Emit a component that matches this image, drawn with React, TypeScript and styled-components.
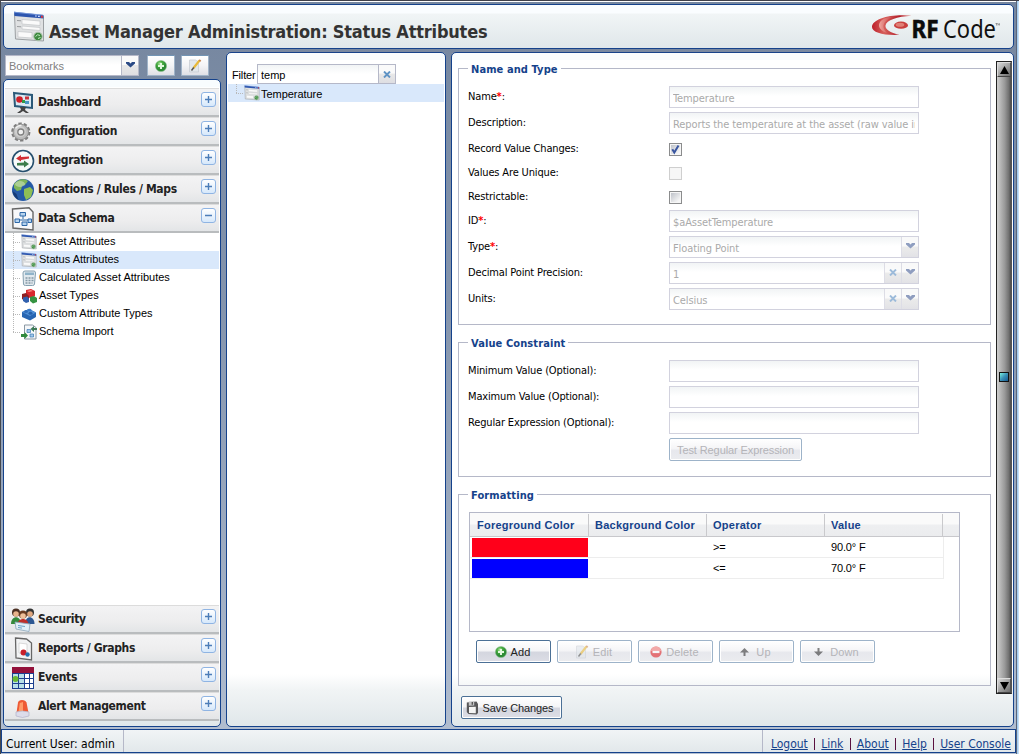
import React from "react";
import styled, { createGlobalStyle } from "styled-components";

const tahoma = `"DejaVu Sans Condensed", "DejaVu Sans", Tahoma, sans-serif`;
const arial = `"Liberation Sans", Arial, sans-serif`;
const navy = "#15428b";

const Global = createGlobalStyle`
  * { box-sizing: border-box; }
  body { margin: 0; overflow: hidden; font: 11px ${arial}; color: #000; }
  svg { display: block; flex: none; }
`;

const Page = styled.div`
  width: 1019px; height: 754px;
  display: flex; flex-direction: column;
  padding: 4px 0 0 3px;
  border-top: 1px solid #3f3f48;
  border-left: 1px solid #44484f;
  background:
    linear-gradient(90deg, #5b6579 0 1px, #a5cdf0 1px 2px, #c5def5 2px) right / 3px 100% no-repeat,
    linear-gradient(#fff, #fff) top / 100% 1px no-repeat,
    linear-gradient(#75869f, #8494ac 40%, #b3bfd1 100%);
`;
const Header = styled.header`
  width: 1011px; height: 45px;
  margin-top: -1px; margin-left: -1px;
  display: flex; align-items: center;
  padding: 0 13px 0 9px;
  border: 1px solid ${navy}; border-radius: 5px;
  background: linear-gradient(#fafdff 0 8px, #f1f5f6 9px, #e0e7ea);
`;
const Title = styled.h1`
  flex: 1; margin: 9px 0 0 4px;
  font: bold 18px ${tahoma}; letter-spacing: -0.2px; color: #333; white-space: nowrap;
`;
const Columns = styled.div`display: flex; margin: 3px 0 0 -1px; height: 675px;`;
const NavColumn = styled.div`width: 218px; margin-right: 5px; display: flex; flex-direction: column;`;
const BookmarkBar = styled.div`height: 27px; padding: 3px 0 0 2px; display: flex; align-items: flex-start;`;
const Panel = styled.section<{ $w?: number }>`
  ${(p) => (p.$w ? `width: ${p.$w}px;` : "flex: 1;")}
  border: 1px solid ${navy}; border-radius: 5px;
  background: linear-gradient(#f8fcfe 0 7px, transparent 7px),
    linear-gradient(#fff calc(100% - 52px), #f1f4f5 calc(100% - 36px), #e0e7ea 100%);
  overflow: hidden;
`;
const NavPanel = styled(Panel)`
  flex: 1; display: flex; flex-direction: column; padding: 8px 1px 5px;
`;
const FilterPanel = styled(Panel)`margin-right: 5px; padding: 10px 1px;`;
const MainPanel = styled(Panel)`flex: none; display: flex; padding: 8px 0 0 6px;`;

const Combo = styled.div<{ $w: number; $h?: number; $dim?: boolean }>`
  width: ${(p) => p.$w}px; height: ${(p) => p.$h ?? 22}px;
  display: flex; border: 1px solid ${(p) => (p.$dim ? "#d2d2de" : "#b5b8c8")};
  background: linear-gradient(#f1f4f5, #fff 9px);
`;
const ComboText = styled.span<{ $arial?: boolean; $color?: string }>`
  flex: 1; min-width: 0; margin: 0 3px; line-height: ${(p) => (p.$arial ? 20 : 23)}px;
  overflow: hidden; white-space: nowrap;
  font-family: ${(p) => (p.$arial ? arial : tahoma)};
  letter-spacing: ${(p) => (p.$arial ? 0 : -0.1)}px;
  color: ${(p) => p.$color ?? "#aaa"};
`;
const Trigger = styled.span<{ $dim?: boolean }>`
  width: 17px; display: flex; justify-content: center; padding-top: 6px;
  border-left: 1px solid ${(p) => (p.$dim ? "#d8d8e2" : "#b5b8c8")};
  background: linear-gradient(#fafafa 0 45%, #e8e8e8 50%, #dedee2);
  opacity: ${(p) => (p.$dim ? 0.85 : 1)};
`;
const IconButton = styled.button`
  width: 28px; height: 21px; margin-left: 8px; padding: 0;
  display: flex; align-items: center; justify-content: center;
  border: 1px solid #9fb3c8; border-top-color: #7395b5; border-radius: 1px;
  background: linear-gradient(#fff, #f4f4f6 50%, #dfe0e6);
  & + & { margin-left: 6px; }
`;

const AccordionHead = styled.div`
  height: 29px; flex: none; display: flex; align-items: center; padding: 0 3px 0 6px;
  border-top: 1px solid #dcdcdc; border-bottom: 2px solid #b9bcbe;
  background: linear-gradient(#f3f3f4, #ededee 60%, #e3e5e7);
  font: bold 12px ${tahoma}; letter-spacing: -0.34px; color: #222;
`;
const HeadIcon = styled.span`width: 24px; height: 24px; margin: 2px 3px 0 0; flex: none;`;
const HeadLabel = styled.span`flex: 1; white-space: nowrap;`;
const Tool = styled.span`
  width: 15px; height: 15px; margin: -5px 0 0; display: flex; align-items: center; justify-content: center;
  border: 1px solid #8fb4e3; border-radius: 3px; background: linear-gradient(#fff, #d6e8fb);
`;
const TreeRow = styled.div<{ $on?: boolean }>`
  height: 18px; display: flex; align-items: center; padding-left: 8px;
  background: ${(p) => (p.$on ? "#d9e8fb" : "transparent")};
`;
const Stem = styled.span<{ $last?: boolean }>`
  width: 8px; height: 18px; flex: none;
  background:
    repeating-linear-gradient(#b8b8b8 0 1px, transparent 1px 2px) left top / 1px ${(p) => (p.$last ? "9px" : "18px")} no-repeat,
    repeating-linear-gradient(90deg, #b8b8b8 0 1px, transparent 1px 2px) 0 9px / 8px 1px no-repeat;
`;
const TreeLabel = styled.span<{ $low?: boolean }>`
  margin: 0 0 0 ${(p) => (p.$low ? 1 : 2)}px; height: 18px; line-height: ${(p) => (p.$low ? 20 : 16)}px;
  white-space: nowrap; letter-spacing: ${(p) => (p.$low ? -0.05 : 0)}px;
`;
const Spacer = styled.div`flex: 1;`;

const FilterRow = styled.div`display: flex; align-items: center; padding-left: 4px; height: 21px;`;
const FilterLabel = styled.label`width: 25px; padding-top: 2px; white-space: nowrap; letter-spacing: -0.15px;`;

const Form = styled.div`width: 533px; margin-right: 5px; padding-top: 7px;`;
const Group = styled.section<{ $h: number; $mb: number }>`
  height: ${(p) => p.$h}px; margin-bottom: ${(p) => p.$mb}px;
  padding-left: 9px;
  border: 1px solid #b5b8c8;
`;
const Legend = styled.h2`
  width: fit-content; height: 14px; margin: -8px 0 11px 0; padding: 0 3px;
  font: bold 11px/17px ${tahoma}; letter-spacing: 0.1px; color: ${navy}; background: #fff;
`;
const Field = styled.div<{ $h: number }>`height: ${(p) => p.$h}px; display: flex;`;
const Label = styled.label`
  width: 201px; padding-top: 4px; font-family: ${tahoma}; letter-spacing: -0.15px; white-space: nowrap;
`;
const Req = styled.span`color: #f00; font-weight: bold;`;
const Check = styled.span<{ $dim?: boolean }>`
  width: 13px; height: 13px; margin-top: 5px;
  border: 1px solid ${(p) => (p.$dim ? "#cfcfcf" : "#8b8c8d")};
  box-shadow: inset 0 0 0 1px #f6f6f6;
  background: ${(p) => (p.$dim ? "#f7f7f7" : "linear-gradient(135deg, #b8bcc4, #f6f6f6 80%)")};
`;

const Button = styled.button<{ $w: number; $dim?: boolean; $gap?: number; $tight?: boolean; $left?: number; $pr?: number }>`
  width: ${(p) => p.$w}px; height: 23px; padding: 0 ${(p) => p.$pr ?? 2}px 0 0; margin-left: ${(p) => p.$left ?? 0}px;
  display: flex; align-items: center; justify-content: center; gap: ${(p) => p.$gap ?? 4}px;
  border: 1px solid ${(p) => (p.$dim ? "#9db3c9" : "#4b7096")}; border-radius: 2px;
  box-shadow: inset 0 0 0 1px #fff;
  background: linear-gradient(#fff, #f5f5f7 45%, ${(p) => (p.$dim ? "#e7e8ed" : "#d4d6df")} 55%, ${(p) => (p.$dim ? "#ebecef" : "#dddee6")});
  font: 11px ${arial}; letter-spacing: ${(p) => (p.$tight ? -0.1 : 0.1)}px; color: ${(p) => (p.$dim ? "#b4b4b8" : "#222")};
  white-space: nowrap;
  svg { opacity: ${(p) => (p.$dim ? 0.6 : 1)}; }
`;
const ButtonBar = styled.div`display: flex; gap: 6px; margin: 8px 0 0 8px;`;

const Grid = styled.div`width: 491px; height: 120px; margin-left: 1px; border: 1px solid #b5b8c8; background: #fff;`;
const gridCols = "119px 118px 118px 118px 1fr";
const GridHead = styled.div`
  display: grid; grid-template-columns: ${gridCols}; height: 24px; padding-top: 1px;
  border-bottom: 1px solid #c8c8cc; background: linear-gradient(#fafafa 0 11px, #eeeff1 12px, #ebecee);
  font: bold 11px/23px ${arial}; letter-spacing: 0.25px; color: ${navy};
`;
const HeadCell = styled.div`
  padding-left: 7px; white-space: nowrap; border-right: 1px solid #c9c9cc;
  & + & { padding-left: 6px; }
  &:last-child { border: 0; }
`;
const GridRow = styled.div`
  display: grid; grid-template-columns: 119px 118px 118px 118px; width: 474px; height: 21px;
  border-right: 1px solid #ededed; border-bottom: 1px solid #ededed; line-height: 21px;
  letter-spacing: -0.15px;
`;
const Cell = styled.div`padding-left: 6px;`;
const Swatch = styled.div<{ $c: string }>`height: 19px; margin: 1px 1px 0 2px; background: ${(p) => p.$c};`;

const Scrollbar = styled.div`
  width: 16px; height: 633px; display: flex; flex-direction: column; justify-content: space-between;
  border: 1px solid #222; border-right-color: #555;
  background: linear-gradient(90deg, #cfcfcf, #999 55%, #707070 85%, #4c4c4c);
`;
const ScrollEnd = styled.span`
  height: 15px; display: flex; align-items: center; justify-content: center;
  border: 1px solid; border-color: #ddd #555 #444 #ddd;
  background: linear-gradient(135deg, #d8d8d8, #6c6c6c);
`;
const Thumb = styled.span`
  width: 10px; height: 10px; margin: 0 0 2px 2px;
  border: 1px solid #111; background: linear-gradient(135deg, #78f0e0, #3a8fb5 50%, #155a92);
`;

const Footer = styled.footer`
  width: 1015px; height: 24px; margin: 2px 0 0 -3px; display: flex;
  border: 1px solid ${navy}; background: linear-gradient(#f1f4f6, #e2e8eb);
  font: 12px/28px ${tahoma}; letter-spacing: -0.02px;
`;
const User = styled.div`width: 122px; padding-left: 4px; border-right: 1px solid #b5b8c8; white-space: nowrap;`;
const Links = styled.nav`
  width: 253px; margin-left: auto; padding: 0 4px 0 8px; display: flex; justify-content: space-between;
  border-left: 1px solid #b5b8c8; white-space: nowrap;
`;
const Link = styled.a`color: ${navy}; text-decoration: underline;`;
const Bar = styled.span`width: 1px; height: 12px; margin-top: 8px; background: #5a1040;`;

const Chevron = ({ c = "#2b4a86" }: { c?: string }) => (
  <svg width="9" height="6" viewBox="0 0 9 6"><path d="M0 0h3l1.500 1.500L6 0h3v1.500L4.500 5.500 0 1.500z" fill={c} /></svg>
);
const Cross = ({ c = "#5f93c4" }: { c?: string }) => (
  <svg width="8" height="7" viewBox="0 0 8 7"><path d="M1 .5l6 6M7 .5l-6 6" stroke={c} strokeWidth="1.9" /></svg>
);
const FormIcon = ({ size }: { size: number }) => (
  <svg width={size} height={size} viewBox="0 0 32 32">
    <path d="M1.500 3l29 2.500V30L2.500 28z" fill="#dfe1e2" stroke="#9b9fa2" />
    <path d="M1 .8L30.500 4v3.500L1.500 5z" fill="#2c55ae" />
    <path d="M1 1.200L30 4.200" stroke="#7d9fe0" strokeWidth=".8" />
    <path d="M22 5h1.800M25 5.300h1.800" stroke="#cddcff" strokeWidth="1.200" /><path d="M28 5.700h1.800" stroke="#e33" strokeWidth="2" />
    <path d="M9 8.500l18 1.500v4.500L9 13zM9 15l18 1.500v3L9 18zM5 20.500l14 1v5.500l-14-1z" fill="#fafafa" stroke="#c3c6c8" strokeWidth=".7" />
    <path d="M4 9.500l4 .3M4 15.500l4 .3" stroke="#9a9d9f" />
    <circle cx="25" cy="25.500" r="4.300" fill="#3f8a41" stroke="#b3c6b4" />
    <path d="M22.500 25.500q2-3 4.500-1M25 27.500l2.500-1" stroke="#bdeebd" fill="none" />
  </svg>
);
const PlusIcon = () => (
  <svg width="12" height="12" viewBox="0 0 12 12">
    <defs><radialGradient id="pg" cx=".4" cy=".3"><stop offset="0" stopColor="#b5e8a5" /><stop offset=".5" stopColor="#47ac3f" /><stop offset="1" stopColor="#2c8a35" /></radialGradient></defs>
    <circle cx="6" cy="6" r="5.600" fill="url(#pg)" stroke="#8abf8c" strokeWidth=".5" />
    <path d="M6 3v6M3 6h6" stroke="#e2f8de" strokeWidth="2" />
  </svg>
);
const PencilIcon = () => (
  <svg width="14" height="14" viewBox="0 0 14 14">
    <path d="M1.500 1h6l3 2v10h-9z" fill="#e2e7ec" stroke="#c4c9d0" strokeWidth=".7" />
    <path d="M11.500 1.500L5.500 9" stroke="#e8b93a" strokeWidth="2.200" /><path d="M12.500 1l-1 1.200" stroke="#c77f4a" strokeWidth="2" />
    <path d="M5.800 8.500L3.500 11.500" stroke="#555" strokeWidth="1.500" />
  </svg>
);
const MinusIcon = () => (
  <svg width="12" height="12" viewBox="0 0 12 12"><circle cx="6" cy="6" r="5.600" fill="#e02427" /><path d="M1 5a5 4.500 0 0110 0" fill="#f07674" /><path d="M2.500 6h7" stroke="#fff" strokeWidth="2.200" /></svg>
);
const Arrow = ({ down }: { down?: boolean }) => (
  <svg width="9" height="8" viewBox="0 0 9 8"><path d={down ? "M3.500 0h2v3.500H9L4.500 8 0 3.500h3.500z" : "M3.500 8h2V4.500H9L4.500 0 0 4.500h3.500z"} fill="#333" /></svg>
);
const SaveIcon = () => (
  <svg width="13" height="14" viewBox="0 0 13 14">
    <path d="M.8 1.500l9.700-1L12 3v9l-1.500 1.500L2.500 13 .8 11z" fill="#58585a" />
    <path d="M2.800 .6l5.400-.4v4.300l-5.400 .3z" fill="#c4c4c6" /><path d="M5.600 1h1.400v2.800H5.600z" fill="#555" />
    <path d="M3 6l6.800-.2v6.400L3 12z" fill="#f4f4f4" />
  </svg>
);
const CheckMark = () => (
  <svg width="11" height="11" viewBox="0 0 11 11"><path d="M2.300 5.200l2 3.300L8.500 1.500" fill="none" stroke="#3a56a0" strokeWidth="2" /></svg>
);
const Logo = () => (
  <svg width="130" height="43" viewBox="0 -4 130 43">
    <defs>
      <linearGradient id="lg" x1="0" x2="1"><stop offset="0" stopColor="#bd1f2a" /><stop offset=".3" stopColor="#d7605c" /><stop offset=".7" stopColor="#b21e28" /><stop offset="1" stopColor="#d95a58" /></linearGradient>
      <linearGradient id="lh" x1="0" x2="1"><stop offset="0" stopColor="#f0a9a1" /><stop offset="1" stopColor="#c2363a" stopOpacity=".3" /></linearGradient>
    </defs>
    <path d="M41.500 6.700C22 4.500 2 9.500 2 18c0 5.500 12 8.700 27.500 7.800C20 23.500 15 20.500 15.500 16.500 16.500 11 27 7.500 41.500 6.700z" fill="url(#lg)" />
    <path d="M12 11c-5 4-4 10 5 13-4-4-5-8-1-12 3-2.700 7-4 11-5-6 .3-11 1.300-15 4z" fill="url(#lh)" />
    <ellipse cx="31" cy="16.200" rx="7" ry="3.600" fill="#c93f3e" /><ellipse cx="30" cy="15.700" rx="4.300" ry="2" fill="#e08076" />
    <text x="41.500" y="29" fontFamily="Noto Sans" fontWeight="700" fontSize="25" textLength="27" lengthAdjust="spacingAndGlyphs" fill="#0c0c0c" stroke="#0c0c0c" strokeWidth=".6">RF</text>
    <text x="73" y="29" fontFamily="Noto Sans" fontWeight="400" fontSize="25" textLength="53" lengthAdjust="spacingAndGlyphs" fill="#111">Code</text>
    <path d="M125.500 14.500h2M126.500 14.500v2M128 16.500v-2l.8 1 .8-1v2" stroke="#555" strokeWidth=".5" fill="none" />
  </svg>
);

const art: Record<string, React.ReactNode> = {
  dashboard: <><path d="M3 2l18 2v13L4 15z" fill="#dbe9f3" stroke="#2a5878" strokeWidth="2" /><circle cx="8.500" cy="8.500" r="3.300" fill="#cf1e28" /><path d="M14 5.500h4v3h-4z" fill="#c9323b" /><path d="M11 9h3v3h-3z" fill="#2f9d45" /><path d="M14 10h4v3h-4z" fill="#4796c4" /><path d="M9 16h6l-1 3 4 3h-3l-3-2-3 2H6l4-3z" fill="#444" /></>,
  gear: <><circle cx="9.800" cy="12" r="8.300" fill="none" stroke="#7d7d7d" strokeWidth="2.600" strokeDasharray="3.300 1.915" /><circle cx="9.800" cy="12" r="7.700" fill="#bcbcbc" stroke="#909090" /><circle cx="9.300" cy="11.500" r="5.500" fill="#cfcfcf" /><circle cx="9.800" cy="12" r="3" fill="#f0f0f0" stroke="#808080" strokeWidth="1.300" /><path d="M4.500 8.500c1-2 4-3.500 6-3" stroke="#efefef" strokeWidth="1.500" fill="none" /></>,
  integration: <><circle cx="12" cy="12" r="10.500" fill="#f7fafa" stroke="#27506f" strokeWidth="1.600" /><path d="M5 9.500L10 6v2l8-.5v2l-8 1.500v1.500z" fill="#d22f35" /><path d="M18 15l-5-3.500v2l-7 .5v2.500l7 0v2z" fill="#3d7d4c" /></>,
  globe: <><circle cx="12" cy="12" r="11" fill="#255aa6" /><path d="M3 6C7 1 13 0 17 3l-3 4-3 1-1 4-4 1-3-3z" fill="#7fb55a" /><path d="M13 11l6-2 3 3-2 7-5 3-2-5z" fill="#8ebf55" /><path d="M1.500 13l4 3 2 6C4 20 2 17 1.500 13z" fill="#163b76" /><ellipse cx="9" cy="6" rx="5" ry="3" fill="#fff" opacity=".35" /></>,
  schema: <><path d="M1.500 2L18 .8 22 5v18L2 21z" fill="#f7f8fa" stroke="#666" strokeWidth="1.400" /><path d="M12 8v4M7 13h12M7 13v2M19 13v2" stroke="#2d68a5" fill="none" /><path d="M9 5.500h5.500V9H9zM4 12h4.500v3.500H4zM11 15h5v3.500h-5zM17 12h3.500v3.500H17z" fill="#b6d3ee" stroke="#2e69a8" /></>,
  security: <><circle cx="5" cy="4.500" r="4" fill="#4c3023" /><circle cx="19" cy="4.500" r="4" fill="#333" /><circle cx="5" cy="6" r="2.800" fill="#e9b48c" /><circle cx="19" cy="6" r="2.800" fill="#e0a77f" /><path d="M0 16c0-9 10-9 10 0z" fill="#348a3c" /><path d="M14 16c0-9 9.500-9 9.500 0z" fill="#2d5792" /><circle cx="12" cy="6.500" r="4" fill="#6a3c22" /><circle cx="12" cy="8" r="2.800" fill="#efc09a" /><path d="M6.500 17c0-8 11-8 11 0z" fill="#bf2f2a" /><path d="M4 14l15 2-1 7.500L5 21z" fill="#e1eff8" stroke="#8aa6ba" strokeWidth=".8" /><path d="M7 17.500l7 1M7 19.500l4 .6" stroke="#6ba3c8" /></>,
  reports: <><path d="M4.500 1l11 1 5 4v17L5 21z" fill="#f2f3f4" stroke="#666" strokeWidth="1.300" /><path d="M8 6l8 1v10l-8-1z" fill="#fff" stroke="#ccc" strokeWidth=".7" /><circle cx="12.500" cy="15.500" r="3" fill="#c8202a" /><circle cx="16.500" cy="17.500" r="2.200" fill="#2470ac" /></>,
  events: <><path d="M1 1h22v22H1z" fill="#fff" /><path d="M1 8h12v15H1z" fill="#88c9d8" opacity=".6" /><path d="M1 7.500h22M1 12.500h22M1 17.500h22M1 22.500h22M1.500 7v16M7.500 7v16M13.500 7v16M18.500 7v16M22.500 7v16" stroke="#1d3f8f" fill="none" /><path d="M1 1h22v6H1z" fill="#93113a" /><circle cx="4.500" cy="13" r="3" fill="#6ab934" /></>,
  alert: <><path d="M5.500 18l1.500-10.500q.5-2.500 4-2.500t4.500 2.500L17.500 18z" fill="#ee5a34" /><path d="M7.500 17l1.300-9 3.200-1V17z" fill="#ff9b68" /><path d="M5 17q6.500-2 13 0v4q-6.500 3-13 0z" fill="#dcdcea" stroke="#b3b3c8" strokeWidth=".7" /></>,
};
const HeaderArt = ({ name }: { name: string }) => <svg width="24" height="24" viewBox="0 0 24 24">{art[name]}</svg>;

const leaf: Record<string, React.ReactNode> = {
  calc: <><path d="M4 1h9q1.500 0 1.500 2L13.500 14q0 1.500-2 1.500H4.500Q2.500 15.500 2.500 14L2 3Q2 1 4 1z" fill="#e1e9ee" stroke="#86a0b0" /><path d="M4 2.500h9V5H4z" fill="#8fb3c9" /><path d="M4.500 8h8M4.500 10.500h8M4.500 13h7" stroke="#8499a6" strokeWidth="1.300" strokeDasharray="2 1" /></>,
  cubes: <><path d="M5 2l5-1 4 2v5l-5 2-4-2z" fill="#d8272d" /><path d="M1 6l4-1 3 3v4l-4 1-3-2z" fill="#8e2022" /><path d="M2 9.500l4-1 2 2V14l-3 1-3-2z" fill="#3160ae" /><path d="M9 9l4-1 3 2v4l-4 1.500L9 13z" fill="#359342" /><path d="M6 3l4-1 2 1-4 1z" fill="#f58b80" /></>,
  brick: <><path d="M1 6l7-3 7 3.500V11l-6 3.500L1 11z" fill="#2866b2" /><path d="M1 6l7-3 7 3.500L9 10z" fill="#5090d6" /><ellipse cx="5" cy="5.500" rx="2" ry="1.500" fill="#2f6dbb" /><ellipse cx="8.500" cy="4" rx="2" ry="1.300" fill="#3a7ac8" /><ellipse cx="9.500" cy="7.300" rx="2" ry="1.500" fill="#2560ab" /></>,
  imp: <><path d="M3.500 1h8L15 3.500V15H3.500z" fill="#f5f7f9" stroke="#8a98a3" /><path d="M6 5.500h3.500v3H6zM9 10h3.500v3H9z" fill="#a2c8e8" stroke="#3b7ab5" strokeWidth=".7" /><path d="M0 10h3.500V8L7 11.500 3.500 15v-2H0z" fill="#2f8a3c" /><path d="M16 4h-3V2l-3.500 3L13 8V6h3z" fill="#3f7a57" /></>,
};
const LeafArt = ({ name }: { name: string }) =>
  name === "form" ? <FormIcon size={16} /> : <svg width="16" height="16" viewBox="0 0 16 16">{leaf[name]}</svg>;

const Section = ({ icon, label, open }: { icon: string; label: string; open?: boolean }) => (
  <AccordionHead>
    <HeadIcon><HeaderArt name={icon} /></HeadIcon>
    <HeadLabel>{label}</HeadLabel>
    <Tool><svg width="9" height="9" viewBox="0 0 9 9"><path d={open ? "M1 4.500h7" : "M1 4.500h7M4.500 1v7"} stroke="#4c7db8" strokeWidth="1.400" /></svg></Tool>
  </AccordionHead>
);

const tree: [string, string][] = [
  ["form", "Asset Attributes"], ["form", "Status Attributes"], ["calc", "Calculated Asset Attributes"],
  ["cubes", "Asset Types"], ["brick", "Custom Attribute Types"], ["imp", "Schema Import"],
];

interface RowProps { label: string; req?: boolean; value?: string; clear?: boolean; drop?: boolean; }
const TextRow = ({ label, req, value = "", clear, drop }: RowProps) => (
  <Field $h={26}>
    <Label>{label}{req && <Req>*</Req>}:</Label>
    <Combo $w={250} $dim>
      <ComboText>{value}</ComboText>
      {clear && <Trigger $dim><Cross c="#8db0d4" /></Trigger>}
      {drop && <Trigger $dim><Chevron c="#7c8db5" /></Trigger>}
    </Combo>
  </Field>
);
const CheckRow = ({ label, on, dim }: { label: string; on?: boolean; dim?: boolean }) => (
  <Field $h={24}><Label>{label}:</Label><Check $dim={dim}>{on && <CheckMark />}</Check></Field>
);

export default function App() {
  return (
    <Page>
      <Global />
      <Header>
        <FormIcon size={32} />
        <Title>Asset Manager Administration: Status Attributes</Title>
        <Logo />
      </Header>
      <Columns>
        <NavColumn>
          <BookmarkBar>
            <Combo $w={134} $h={21}><ComboText $arial $color="#808080">Bookmarks</ComboText><Trigger><Chevron /></Trigger></Combo>
            <IconButton><PlusIcon /></IconButton>
            <IconButton><PencilIcon /></IconButton>
          </BookmarkBar>
          <NavPanel>
            <Section icon="dashboard" label="Dashboard" />
            <Section icon="gear" label="Configuration" />
            <Section icon="integration" label="Integration" />
            <Section icon="globe" label="Locations / Rules / Maps" />
            <Section icon="schema" label="Data Schema" open />
            {tree.map(([icon, label], i) => (
              <TreeRow key={label} $on={i === 1}>
                <Stem $last={i === tree.length - 1} /><LeafArt name={icon} /><TreeLabel>{label}</TreeLabel>
              </TreeRow>
            ))}
            <Spacer />
            <Section icon="security" label="Security" />
            <Section icon="reports" label="Reports / Graphs" />
            <Section icon="events" label="Events" />
            <Section icon="alert" label="Alert Management" />
          </NavPanel>
        </NavColumn>
        <FilterPanel $w={220}>
          <FilterRow>
            <FilterLabel>Filter</FilterLabel>
            <Combo $w={139} $h={20}><ComboText $arial $color="#000">temp</ComboText><Trigger><Cross /></Trigger></Combo>
          </FilterRow>
          <TreeRow $on><Stem $last /><LeafArt name="form" /><TreeLabel $low>Temperature</TreeLabel></TreeRow>
        </FilterPanel>
        <MainPanel $w={563}>
          <Form>
            <Group $h={257} $mb={17}>
              <Legend>Name and Type</Legend>
              <TextRow label="Name" req value="Temperature" />
              <TextRow label="Description" value="Reports the temperature at the asset (raw value in degrees Celsius)" />
              <CheckRow label="Record Value Changes" on />
              <CheckRow label="Values Are Unique" dim />
              <CheckRow label="Restrictable" />
              <TextRow label="ID" req value="$aAssetTemperature" />
              <TextRow label="Type" req value="Floating Point" drop />
              <TextRow label="Decimal Point Precision" value="1" clear drop />
              <TextRow label="Units" value="Celsius" clear drop />
            </Group>
            <Group $h={135} $mb={17}>
              <Legend>Value Constraint</Legend>
              <TextRow label="Minimum Value (Optional)" />
              <TextRow label="Maximum Value (Optional)" />
              <TextRow label="Regular Expression (Optional)" />
              <Field $h={24}><Label /><Button $w={133} $dim $tight $pr={0}>Test Regular Expression</Button></Field>
            </Group>
            <Group $h={192} $mb={10}>
              <Legend>Formatting</Legend>
              <Grid>
                <GridHead>
                  <HeadCell>Foreground Color</HeadCell><HeadCell>Background Color</HeadCell>
                  <HeadCell>Operator</HeadCell><HeadCell>Value</HeadCell><HeadCell />
                </GridHead>
                <GridRow><Swatch $c="#ff001a" /><Cell /><Cell>&gt;=</Cell><Cell>90.0° F</Cell></GridRow>
                <GridRow><Swatch $c="#0000ff" /><Cell /><Cell>&lt;=</Cell><Cell>70.0° F</Cell></GridRow>
              </Grid>
              <ButtonBar>
                <Button $w={75}><PlusIcon />Add</Button>
                <Button $w={75} $dim><PencilIcon />Edit</Button>
                <Button $w={75} $dim><MinusIcon />Delete</Button>
                <Button $w={75} $dim $gap={7}><Arrow />Up</Button>
                <Button $w={75} $dim $gap={7}><Arrow down />Down</Button>
              </ButtonBar>
            </Group>
            <Button $w={101} $left={3} $pr={4} $tight><SaveIcon />Save Changes</Button>
          </Form>
          <Scrollbar>
            <ScrollEnd><svg width="9" height="8"><path d="M4.500 0L9 8H0z" /></svg></ScrollEnd>
            <Thumb />
            <ScrollEnd><svg width="9" height="8"><path d="M0 0h9L4.500 8z" /></svg></ScrollEnd>
          </Scrollbar>
        </MainPanel>
      </Columns>
      <Footer>
        <User>Current User: admin</User>
        <Links>
          <Link>Logout</Link><Bar /><Link>Link</Link><Bar /><Link>About</Link><Bar /><Link>Help</Link><Bar /><Link>User Console</Link>
        </Links>
      </Footer>
    </Page>
  );
}
